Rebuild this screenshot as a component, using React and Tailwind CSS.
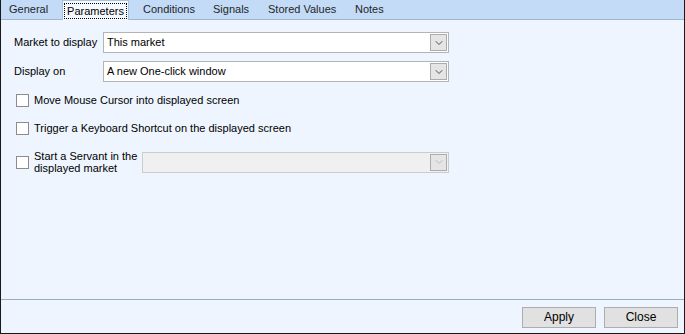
import { ChevronDown } from "lucide-react";

const tabs = [
  { label: "General", w: "w-[58px]" },
  { label: "Parameters", w: "w-[76px]", active: true },
  { label: "Conditions", w: "w-[70px]" },
  { label: "Signals", w: "w-[55px]" },
  { label: "Stored Values", w: "w-[87px]" },
  { label: "Notes", w: "w-[60px]" },
];

const Combo = ({ value, disabled, width }) => (
  <div
    className={`${width} h-[21px] flex items-center border ${
      disabled ? "border-[#cccccc] bg-[#f0f0f0]" : "border-[#b4b4b4] bg-white"
    }`}
  >
    <span className="flex-1 pl-[3px] leading-none whitespace-nowrap">{value}</span>
    <div className="w-[17px] h-[17px] mr-[1px] flex items-center justify-center border border-[#acacac] bg-[#e5e5e5]">
      <ChevronDown size={12} strokeWidth={1.8} className={disabled ? "text-[#b8b8b8]" : "text-[#404040]"} />
    </div>
  </div>
);

const Check = () => (
  <div className="w-[13px] h-[13px] border border-[#8c8c8c] bg-white shrink-0" />
);

const App = () => {
  return (
    <div
      className="w-[685px] h-[334px] flex flex-col border-x border-b border-[#1a1a1a] bg-[#eef5fe] text-[11px] text-black"
      style={{ fontFamily: '"Liberation Sans", Arial, sans-serif' }}
    >
      <div className="h-[20px] flex bg-[#c3dbf7] border-b border-[#9fb6cd]">
        {tabs.map((t) =>
          t.active ? (
            <div key={t.label} className={`${t.w} pl-[3px] flex`}>
              <div className="w-[67px] h-[20px] -mb-px bg-[#f4f9ff] border-x border-t border-[#aac2dc] flex items-center justify-center">
                <span className="border border-dotted border-black px-[2px] leading-[14px] whitespace-nowrap">{t.label}</span>
              </div>
            </div>
          ) : (
            <div key={t.label} className={`${t.w} pl-[8px] flex items-center whitespace-nowrap text-[#1f1f1f]`}>
              {t.label}
            </div>
          )
        )}
      </div>

      <div className="flex-1 pl-[13px] pt-[12px]">
        <div className="flex items-center h-[21px]">
          <span className="w-[89px] whitespace-nowrap">Market to display</span>
          <Combo value="This market" width="w-[346px]" />
        </div>
        <div className="flex items-center h-[21px] mt-[8px]">
          <span className="w-[89px] whitespace-nowrap">Display on</span>
          <Combo value="A new One-click window" width="w-[346px]" />
        </div>
        <div className="flex items-center gap-[5px] pl-[2px] mt-[8px] h-[20px]">
          <Check />
          <span>Move Mouse Cursor into displayed screen</span>
        </div>
        <div className="flex items-center gap-[5px] pl-[2px] mt-[8px] h-[20px]">
          <Check />
          <span>Trigger a Keyboard Shortcut on the displayed screen</span>
        </div>
        <div className="flex items-center pl-[2px] mt-[11px] h-[26px]">
          <Check />
          <span className="w-[113px] pl-[5px] leading-[12px] whitespace-nowrap">
            Start a Servant in the
            <br />
            displayed market
          </span>
          <Combo value="" disabled width="w-[307px]" />
        </div>
      </div>

      <div className="h-[34px] border-t border-[#98aec4] flex items-center justify-end gap-[8px] pr-[6px] pt-[1px]">
        <button className="w-[74px] h-[21px] bg-[#e1e1e1] border border-[#adadad] text-[12px]">Apply</button>
        <button className="w-[74px] h-[21px] bg-[#e1e1e1] border border-[#adadad] text-[12px]">Close</button>
      </div>
    </div>
  );
};

export default App;
